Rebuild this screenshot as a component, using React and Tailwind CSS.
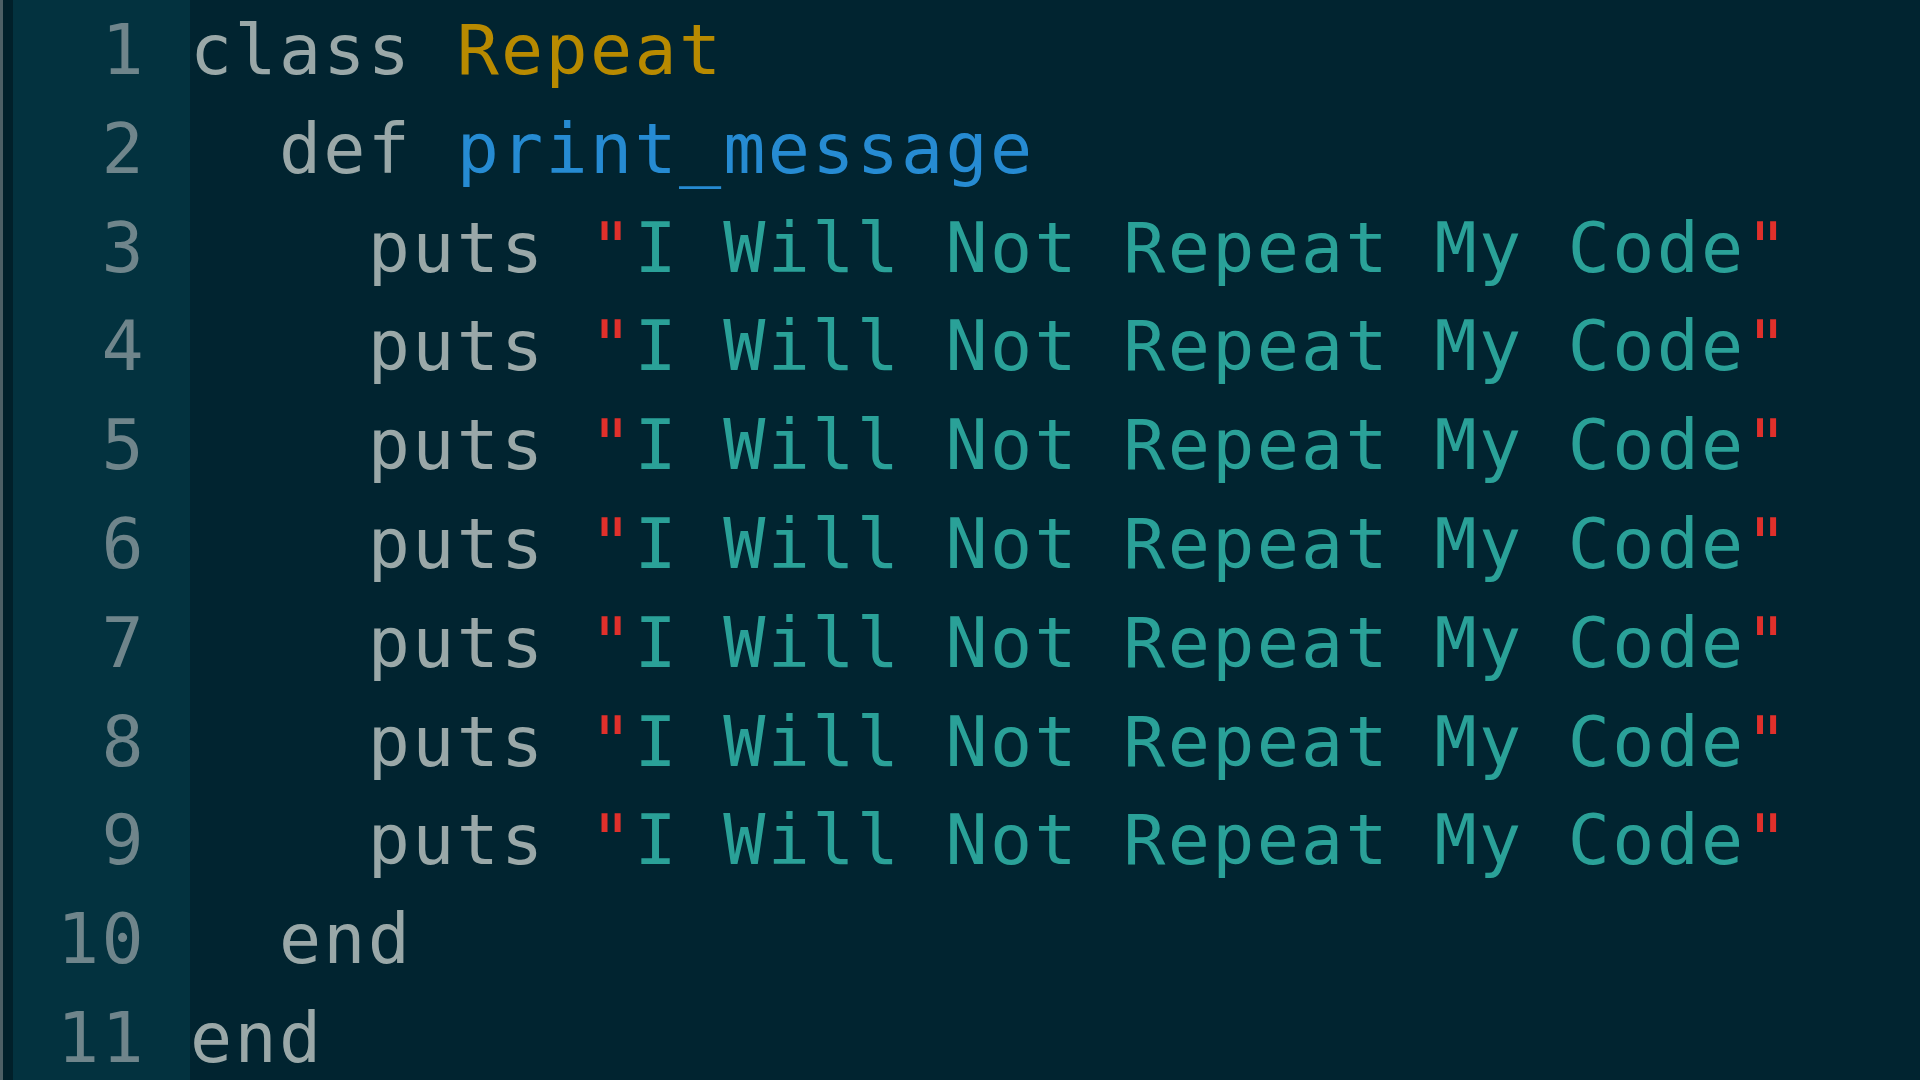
const lines = [
  [['t', 'class '], ['y', 'Repeat']],
  [['t', '  def '], ['b', 'print_message']],
  ...Array.from({ length: 7 }, () => [
    ['t', '    puts '],
    ['r', '"'],
    ['c', 'I Will Not Repeat My Code'],
    ['r', '"'],
  ]),
  [['t', '  end']],
  [['t', 'end']],
]

const tone = {
  t: 'text-[#9aa8a8]',
  y: 'text-[#b88a00]',
  b: 'text-[#268bd2]',
  c: 'text-[#2aa198]',
  r: 'text-[#e0302b]',
}

export default function App() {
  return (
    <div
      className="flex h-[1080px] w-[1920px] overflow-hidden bg-[#012430] text-[70px] leading-[98.8px] tracking-[2.3px] whitespace-pre"
      style={{ fontFamily: '"DejaVu Sans Mono", "Liberation Mono", monospace' }}
    >
      {/* left edge */}
      <div className="w-[3px] bg-[#4d5f65]" />
      <div className="w-[10px] bg-[#01202a]" />

      {/* gutter */}
      <div className="w-[177px] shrink-0 bg-[#03323f] pt-[1px] pr-[44px] text-right text-[#6f858b]">
        {lines.map((_, i) => (
          <div key={i}>{i + 1}</div>
        ))}
      </div>

      {/* code */}
      <div className="flex-1 pt-[1px]">
        {lines.map((parts, i) => (
          <div key={i}>
            {parts.map(([k, txt], j) => (
              <span key={j} className={tone[k]}>
                {txt}
              </span>
            ))}
          </div>
        ))}
      </div>
    </div>
  )
}
